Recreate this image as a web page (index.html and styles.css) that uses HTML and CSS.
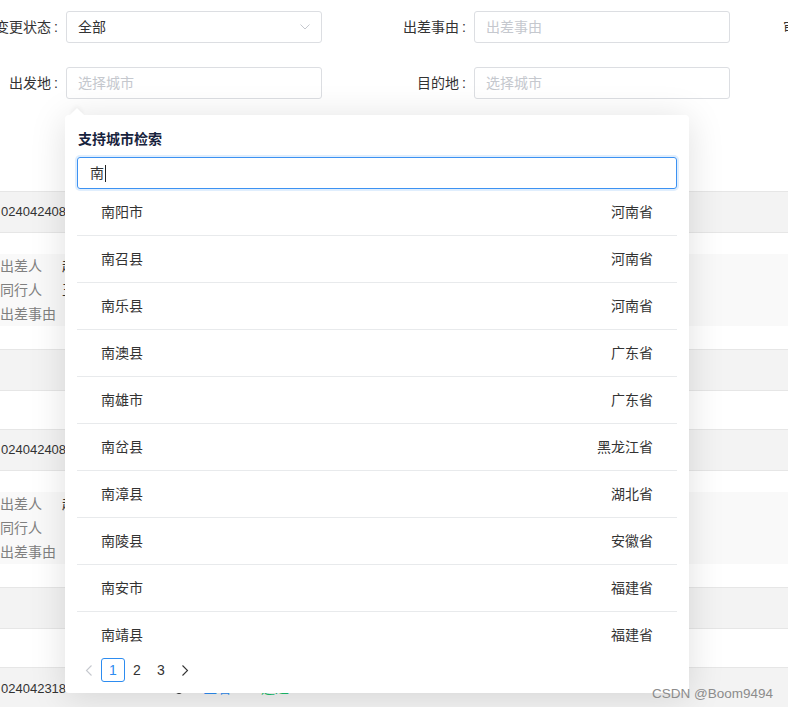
FILE: index.html
```html
<!DOCTYPE html>
<html lang="zh-CN">
<head>
<meta charset="utf-8">
<title>城市检索</title>
<link rel="stylesheet" href="styles.css">
</head>
<body>
<div class="page">
  <form class="filters">
    <div class="filter-row">
      <div class="field">
        <label class="field-label">变更状态</label>
        <div class="control select">
          <span>全部</span>
          <svg class="select-arrow" width="10" height="6" viewBox="0 0 10 6"><path d="M0.5 0.5 L5 5 L9.5 0.5" fill="none" stroke="#c5c8ce" stroke-width="1"/></svg>
        </div>
      </div>
      <div class="field">
        <label class="field-label">出差事由</label>
        <div class="control"><span class="placeholder">出差事由</span></div>
      </div>
      <div class="field">
        <label class="field-label">审批完成时间</label>
        <div class="control"><span class="placeholder">选择日期</span></div>
      </div>
    </div>
    <div class="filter-row">
      <div class="field">
        <label class="field-label">出发地</label>
        <div class="control"><span class="placeholder">选择城市</span></div>
      </div>
      <div class="field">
        <label class="field-label">目的地</label>
        <div class="control"><span class="placeholder">选择城市</span></div>
      </div>
    </div>
  </form>

  <div class="records">
    <div class="record">
      <div class="rec-head">024042408</div>
      <div class="rec-body">
        <div class="rec-line"><span class="rec-key">出差人</span><span class="rec-val">赵明</span></div>
        <div class="rec-line"><span class="rec-key">同行人</span><span class="rec-val">王芳</span></div>
        <div class="rec-line"><span class="rec-key">出差事由</span><span class="rec-val"></span></div>
      </div>
      <div class="rec-foot"></div>
    </div>
    <div class="record">
      <div class="rec-head">024042408</div>
      <div class="rec-body">
        <div class="rec-line"><span class="rec-key">出差人</span><span class="rec-val">赵明</span></div>
        <div class="rec-line"><span class="rec-key">同行人</span><span class="rec-val"></span></div>
        <div class="rec-line"><span class="rec-key">出差事由</span><span class="rec-val"></span></div>
      </div>
      <div class="rec-foot"></div>
    </div>
    <div class="record">
      <div class="rec-head">024042318
        <span class="rec-icon"></span>
        <span class="rec-link blue">查看</span>
        <span class="rec-link green">通过</span>
      </div>
    </div>
  </div>
</div>

<div class="popover">
  <span class="popover-arrow"></span>
  <div class="popover-title">支持城市检索</div>
  <div class="search-input"><span>南</span><span class="caret"></span></div>
  <ul class="city-list">
    <li><span>南阳市</span><span>河南省</span></li>
    <li><span>南召县</span><span>河南省</span></li>
    <li><span>南乐县</span><span>河南省</span></li>
    <li><span>南澳县</span><span>广东省</span></li>
    <li><span>南雄市</span><span>广东省</span></li>
    <li><span>南岔县</span><span>黑龙江省</span></li>
    <li><span>南漳县</span><span>湖北省</span></li>
    <li><span>南陵县</span><span>安徽省</span></li>
    <li><span>南安市</span><span>福建省</span></li>
    <li><span>南靖县</span><span>福建省</span></li>
  </ul>
  <div class="pager">
    <span class="pager-item disabled"><svg width="8" height="11" viewBox="0 0 8 11"><path d="M6.5 0.5 L1.5 5.5 L6.5 10.5" fill="none" stroke="currentColor" stroke-width="1.1"/></svg></span>
    <span class="pager-item active">1</span>
    <span class="pager-item">2</span>
    <span class="pager-item">3</span>
    <span class="pager-item"><svg width="8" height="11" viewBox="0 0 8 11"><path d="M1.5 0.5 L6.5 5.5 L1.5 10.5" fill="none" stroke="currentColor" stroke-width="1.1"/></svg></span>
  </div>
</div>

<div class="watermark">CSDN @Boom9494</div>
</body>
</html>
```

FILE: styles.css
```css
* {
  box-sizing: border-box;
}

html, body {
  margin: 0;
  padding: 0;
  width: 788px;
  height: 707px;
  overflow: hidden;
  background: #ffffff;
}

body {
  font-family: "Liberation Sans", "Noto Sans CJK SC", sans-serif;
  font-size: 14px;
  color: #333333;
  position: relative;
}

.page {
  width: 788px;
  height: 707px;
  overflow: hidden;
}

/* ---------- filter form ---------- */
.filters {
  margin: 0 0 0 -86px;
  padding-top: 11px;
  display: flex;
  flex-direction: column;
  gap: 24px;
}

.filter-row {
  display: flex;
  white-space: nowrap;
}

.field {
  display: flex;
  align-items: center;
  flex: 0 0 408px;
  height: 32px;
}

.field-label {
  flex: 0 0 152px;
  text-align: right;
  padding-right: 8px;
  line-height: 32px;
  color: #333333;
}

.field-label::after {
  content: ":";
  margin-left: 3px;
}

.control {
  flex: 0 0 256px;
  height: 32px;
  border: 1px solid #dcdee2;
  border-radius: 3px;
  padding: 0 11px;
  display: flex;
  align-items: center;
  justify-content: space-between;
  line-height: 30px;
  color: #333333;
  background: #fff;
}

.placeholder {
  color: #c5c8ce;
}

.select-arrow {
  display: block;
}

/* ---------- background records ---------- */
.records {
  margin-top: 92px;
}

.record {
  padding-bottom: 38px;
}

.rec-head {
  height: 42px;
  background: #f3f3f3;
  border-top: 1px solid #e6e6e6;
  border-bottom: 1px solid #e6e6e6;
  font-size: 13px;
  line-height: 40px;
  padding-left: 1px;
  color: #333;
  white-space: nowrap;
}

.rec-icon {
  display: inline-block;
  width: 10px;
  height: 10px;
  border: 1.5px solid #333;
  border-radius: 50%;
  margin-left: 104px;
  vertical-align: -1px;
}

.rec-link {
  font-size: 14px;
}

.rec-link.blue {
  color: #2d8cf0;
  margin-left: 16px;
}

.rec-link.green {
  color: #19be6b;
  margin-left: 26px;
}

.rec-body {
  margin-top: 21px;
  height: 72px;
  background: #f9f9f9;
}

.rec-line {
  display: flex;
  line-height: 24px;
  color: #808080;
  white-space: nowrap;
}

.rec-key {
  flex: 0 0 62px;
}

.rec-val {
  color: #333;
}

.rec-foot {
  margin-top: 23px;
  height: 42px;
  background: #f3f3f3;
  border-top: 1px solid #e6e6e6;
  border-bottom: 1px solid #e6e6e6;
}

/* ---------- popover ---------- */
.popover {
  position: absolute;
  left: 65px;
  top: 115px;
  width: 624px;
  height: 578px;
  padding: 12px;
  background: #ffffff;
  border-radius: 4px;
  box-shadow: 0 4px 36px rgba(0, 0, 0, 0.13);
}

.popover-arrow {
  position: absolute;
  left: 7px;
  top: -5px;
  width: 10px;
  height: 10px;
  background: #fff;
  transform: rotate(45deg);
  box-shadow: -2px -2px 4px rgba(0, 0, 0, 0.04);
}

.popover-title {
  font-weight: bold;
  font-size: 14px;
  line-height: 24px;
  color: #17233d;
  margin-bottom: 6px;
  padding-left: 1px;
}

.search-input {
  height: 32px;
  border: 1px solid #3d92f2;
  border-radius: 3px;
  box-shadow: 0 0 0 2px rgba(45, 140, 240, 0.15);
  padding: 0 12px;
  display: flex;
  align-items: center;
  line-height: 30px;
  color: #333;
}

.caret {
  display: inline-block;
  width: 1px;
  height: 17px;
  background: #222;
  margin-left: 1px;
}

.city-list {
  list-style: none;
  margin: 0;
  padding: 0;
}

.city-list li {
  height: 47px;
  border-bottom: 1px solid #e8eaec;
  padding: 0 24px 3px;
  display: flex;
  align-items: center;
  justify-content: space-between;
  color: #333;
}

.city-list li:last-child {
  border-bottom: none;
  height: 46px;
}

.pager {
  display: flex;
}

.pager-item {
  width: 24px;
  height: 24px;
  display: flex;
  align-items: center;
  justify-content: center;
  font-size: 14px;
  color: #333;
  border-radius: 3px;
}

.pager-item.disabled {
  color: #c5c8ce;
}

.pager-item.active {
  border: 1px solid #2d8cf0;
  color: #2d8cf0;
}

/* ---------- watermark ---------- */
.watermark {
  position: absolute;
  right: 15px;
  bottom: 6px;
  font-family: "Liberation Sans", sans-serif;
  font-size: 13.5px;
  color: #8c8c8c;
  white-space: nowrap;
}
```
